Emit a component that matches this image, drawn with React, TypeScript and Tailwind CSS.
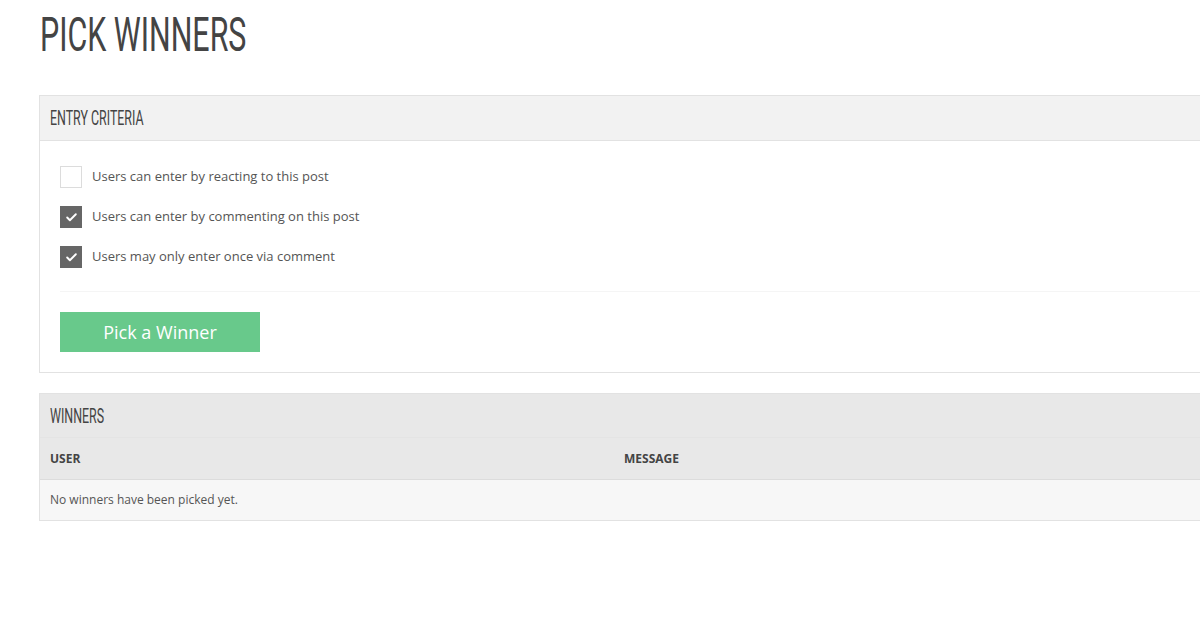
import { Check } from 'lucide-react'

const criteria = [
	{ label: 'Users can enter by reacting to this post', checked: false },
	{ label: 'Users can enter by commenting on this post', checked: true },
	{ label: 'Users may only enter once via comment', checked: true },
]

// condensed display face for headings
function Heading({ children, className }: { children: string; className: string }) {
	return (
		<span
			className={`inline-block origin-left scale-x-[0.62] whitespace-nowrap font-['Roboto',sans-serif] text-[#444] ${className}`}
		>
			{children}
		</span>
	)
}

function CheckRow({ label, checked }: { label: string; checked: boolean }) {
	return (
		<div className="flex h-[40px] items-center">
			{checked ? (
				<div className="flex h-[22px] w-[22px] items-center justify-center bg-[#666]">
					<Check className="h-[13px] w-[13px] text-white" strokeWidth={3.5} />
				</div>
			) : (
				<div className="h-[22px] w-[22px] border border-[#dcdcdc] bg-white" />
			)}
			<span className="ml-[10px] text-[13px] text-[#555]">{label}</span>
		</div>
	)
}

export default function App() {
	return (
		<div className="h-[630px] w-[1200px] overflow-hidden bg-white font-['Open_Sans',sans-serif]">
			<div className="w-[1240px] pl-[39px]">
				<div className="h-[95px] pl-[1px] pt-[10px]">
					<Heading className="text-[49px] leading-none">PICK WINNERS</Heading>
				</div>

				{/* entry criteria panel */}
				<div className="border border-[#e2e2e2]">
					<div className="flex h-[45px] items-center border-b border-[#e2e2e2] bg-[#f2f2f2] px-[10px]">
						<Heading className="text-[20px] leading-none">ENTRY CRITERIA</Heading>
					</div>
					<div className="px-[20px] pb-[20px] pt-[16px]">
						{criteria.map((c) => (
							<CheckRow key={c.label} label={c.label} checked={c.checked} />
						))}
						<div className="mt-[14px] border-t border-[#f5f5f5]" />
						<button className="mt-[20px] flex h-[40px] w-[200px] items-center justify-center bg-[#68c98b] text-[18px] text-white">
							Pick a Winner
						</button>
					</div>
				</div>

				{/* winners panel */}
				<div className="mt-[20px] border border-[#e2e2e2]">
					<div className="flex h-[44px] items-center border-b border-[#e4e4e4] bg-[#e8e8e8] px-[10px]">
						<Heading className="text-[20px] leading-none">WINNERS</Heading>
					</div>
					<div className="flex h-[42px] items-center border-b border-[#dcdcdc] bg-[#e8e8e8] pt-[1px] text-[12px] font-bold text-[#444]">
						<div className="w-[574px] px-[10px]">USER</div>
						<div className="px-[10px]">MESSAGE</div>
					</div>
					<div className="flex h-[40px] items-center bg-[#f7f7f7] px-[10px] text-[12px] text-[#555]">
						No winners have been picked yet.
					</div>
				</div>
			</div>
		</div>
	)
}
